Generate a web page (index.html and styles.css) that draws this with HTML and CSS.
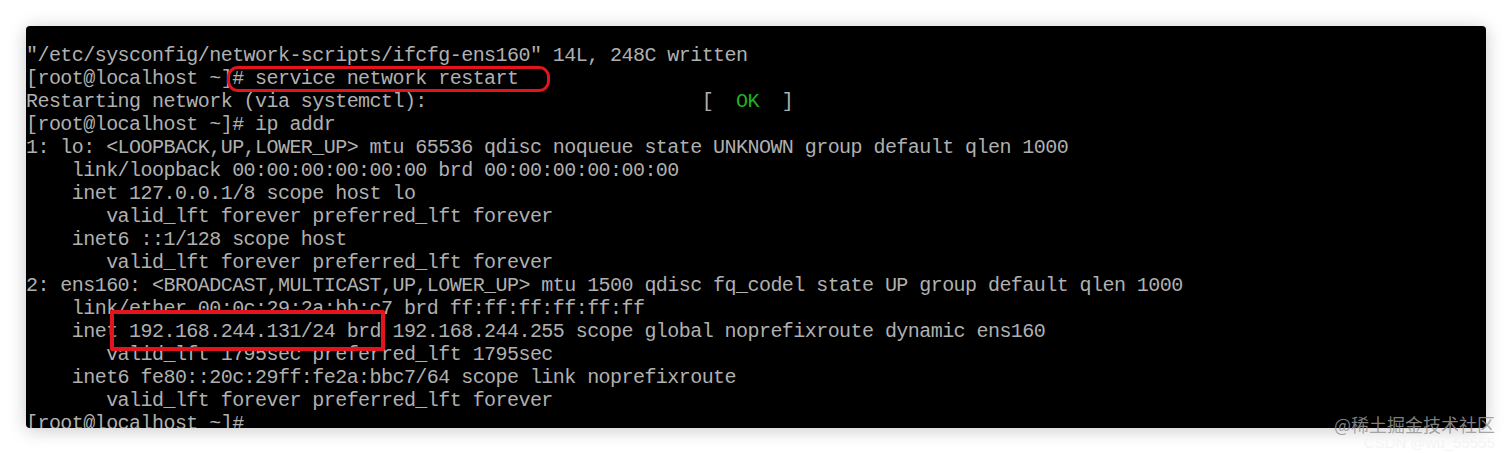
FILE: index.html
```html
<!DOCTYPE html>
<html lang="en">
<head>
    <meta charset="UTF-8">
    <meta name="viewport" content="width=device-width, initial-scale=1.0">
    <title>ip addr</title>
    <link rel="stylesheet" href="styles.css">
</head>
<body>
    <div class="shot">
        <div class="screen">
<pre class="console">"/etc/sysconfig/network-scripts/ifcfg-ens160" 14L, 248C written
[root@localhost ~]# service network restart
Restarting network (via systemctl):                        [  <span class="ok">OK</span>  ]
[root@localhost ~]# ip addr
1: lo: &lt;LOOPBACK,UP,LOWER_UP&gt; mtu 65536 qdisc noqueue state UNKNOWN group default qlen 1000
    link/loopback 00:00:00:00:00:00 brd 00:00:00:00:00:00
    inet 127.0.0.1/8 scope host lo
       valid_lft forever preferred_lft forever
    inet6 ::1/128 scope host
       valid_lft forever preferred_lft forever
2: ens160: &lt;BROADCAST,MULTICAST,UP,LOWER_UP&gt; mtu 1500 qdisc fq_codel state UP group default qlen 1000
    link/ether 00:0c:29:2a:bb:c7 brd ff:ff:ff:ff:ff:ff
    inet 192.168.244.131/24 brd 192.168.244.255 scope global noprefixroute dynamic ens160
       valid_lft 1795sec preferred_lft 1795sec
    inet6 fe80::20c:29ff:fe2a:bbc7/64 scope link noprefixroute
       valid_lft forever preferred_lft forever
[root@localhost ~]#</pre>
            <div class="mark mark-cmd"></div>
            <div class="mark mark-ip"></div>
        </div>
        <div class="watermark">
            <span class="wm-main">@稀土掘金技术社区</span>
            <span class="wm-sub">CSDN @wu_55555</span>
        </div>
    </div>
</body>
</html>
```
FILE: styles.css
```css
body {
    margin: 0;
    background-color: #ffffff;
    font-family: "Liberation Sans", Arial, sans-serif;
}
.shot {
    position: relative;
    width: 1512px;
    height: 453px;
    padding: 26px 26px 0 26px;
    box-sizing: border-box;
    overflow: hidden;
}
.screen {
    position: relative;
    width: 1460px;
    height: 402px;
    background-color: #000000;
    border-radius: 4px;
    overflow: hidden;
    box-shadow: 0 2px 18px rgba(0, 0, 0, 0.22);
}
.console {
    margin: 0;
    padding: 18px 0 0 0;
    font-family: "Liberation Mono", "DejaVu Sans Mono", monospace;
    font-size: 20px;
    letter-spacing: -0.55px;
    line-height: 23px;
    color: #b0b0b0;
    white-space: pre;
}
.ok {
    color: #22b222;
}
.mark {
    position: absolute;
    border: 3px solid #e3141b;
    box-sizing: border-box;
}
.mark-cmd {
    left: 201px;
    top: 40px;
    width: 323px;
    height: 26px;
    border-radius: 11px;
}
.mark-ip {
    left: 84px;
    top: 284px;
    width: 275px;
    height: 41px;
    border-width: 4px;
    border-radius: 2px;
}
.watermark {
    position: absolute;
    right: 17px;
    top: 413px;
    display: flex;
    flex-direction: column;
    align-items: flex-end;
    font-family: "Noto Sans CJK SC", sans-serif;
}
.wm-main {
    font-size: 18px;
    line-height: 22px;
    color: rgba(150, 150, 150, 0.85);
}
.wm-sub {
    font-family: "Liberation Sans", Arial, sans-serif;
    font-size: 15px;
    line-height: 15px;
    color: #f4f4f4;
}
```
